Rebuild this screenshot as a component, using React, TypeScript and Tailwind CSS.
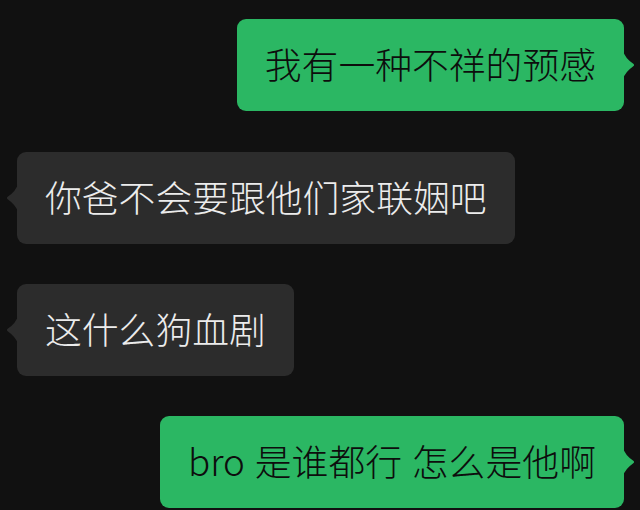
import React from "react";

const GREEN = "#2bb763";
const GRAY = "#2c2c2c";

function Tail({ side, color }: { side: "left" | "right"; color: string }) {
  const d =
    side === "right"
      ? "M0 0 Q 2 7 10 12.6 Q 12.2 14 10 15.4 Q 2 21 0 28 Z"
      : "M12 0 Q 10 7 2 12.6 Q -0.2 14 2 15.4 Q 10 21 12 28 Z";
  return (
    <svg
      width="12"
      height="28"
      viewBox="0 0 12 28"
      className={
        side === "right"
          ? "absolute top-1/2 -translate-y-1/2 right-[-11px]"
          : "absolute top-1/2 -translate-y-1/2 left-[-11px]"
      }
    >
      <path d={d} fill={color} />
    </svg>
  );
}

function Bubble({ text, mine, wide }: { text: string; mine: boolean; wide?: boolean }) {
  return (
    <div className={mine ? "flex justify-end" : "flex justify-start"}>
      <div
        className={
          (mine
            ? "relative rounded-[9px] bg-[#2bb763] text-[#0d0d0d] px-[28px] pt-[26px] pb-[30px] text-[36.8px] leading-[36px] font-light whitespace-nowrap"
            : "relative rounded-[9px] bg-[#2c2c2c] text-[#ececec] px-[28px] pt-[26px] pb-[30px] text-[36.8px] leading-[36px] font-light whitespace-nowrap") +
          (wide ? " [word-spacing:1.5px] tracking-[0.05px]" : "")
        }
      >
        {text}
        <Tail side={mine ? "right" : "left"} color={mine ? GREEN : GRAY} />
      </div>
    </div>
  );
}

export default function App() {
  return (
    <div
      className="w-[640px] h-[510px] bg-[#111111] overflow-hidden flex flex-col gap-[40px] pt-[19px] pl-[17px] pr-[16px]"
      style={{ fontFamily: '"Noto Sans CJK SC", "Noto Sans", sans-serif' }}
    >
      <Bubble text="我有一种不祥的预感" mine />
      <div className="mt-px">
        <Bubble text="你爸不会要跟他们家联姻吧" mine={false} />
      </div>
      <Bubble text="这什么狗血剧" mine={false} />
      <Bubble text="bro 是谁都行 怎么是他啊" mine wide />
    </div>
  );
}
